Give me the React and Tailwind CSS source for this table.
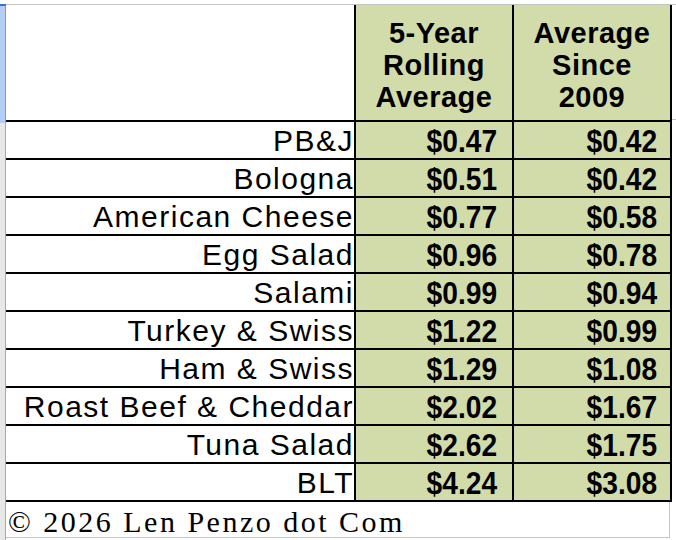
import React from "react";

const rows = [
  ["PB&J", "$0.47", "$0.42"],
  ["Bologna", "$0.51", "$0.42"],
  ["American Cheese", "$0.77", "$0.58"],
  ["Egg Salad", "$0.96", "$0.78"],
  ["Salami", "$0.99", "$0.94"],
  ["Turkey & Swiss", "$1.22", "$0.99"],
  ["Ham & Swiss", "$1.29", "$1.08"],
  ["Roast Beef & Cheddar", "$2.02", "$1.67"],
  ["Tuna Salad", "$2.62", "$1.75"],
  ["BLT", "$4.24", "$3.08"],
];

const label = "font-['Liberation_Sans',Arial,sans-serif] text-[30px] tracking-[1.5px] text-black";
// condensed bold figures, like Arial Narrow
const num =
  "inline-block origin-right scale-x-[0.88] font-['Liberation_Sans',Arial,sans-serif] font-bold text-[32px] leading-none text-black";

const App = () => {
  return (
    <div className="w-[676px] h-[540px] bg-white flex overflow-hidden">
      {/* Row header strip */}
      <div className="w-[6px] flex flex-col">
        <div className="h-[4px] bg-white" />
        <div className="h-[2px] bg-[#3d6fd1]" />
        <div className="h-[117px] bg-[#b3cdf5] border-r border-[#7d9bd3]" />
        <div className="flex-1 bg-[#e8e8e8] border-r border-[#a9a9a9]" />
      </div>

      <div className="flex flex-col">
        <div className="h-[5px] border-b border-[#c4c4c4]" />

        {/* Header */}
        <div className="flex h-[117px] border-b-2 border-black">
          <div className="w-[348px]" />
          <div className="w-[158px] border-l-2 border-black bg-[#d2dcaa] flex items-center justify-center pt-[4px]">
            <div className="font-['Liberation_Sans',Arial,sans-serif] font-bold text-[29px] leading-[32px] tracking-[0.5px] text-center text-black">
              5-Year
              <br />
              Rolling
              <br />
              Average
            </div>
          </div>
          <div className="w-[160px] border-x-2 border-black bg-[#d2dcaa] flex items-center justify-center pt-[4px]">
            <div className="font-['Liberation_Sans',Arial,sans-serif] font-bold text-[29px] leading-[32px] tracking-[0.5px] text-center text-black">
              Average
              <br />
              Since
              <br />
              2009
            </div>
          </div>
        </div>

        {/* Data rows */}
        {rows.map(([name, a, b]) => (
          <div key={name} className="flex h-[38px] border-b-2 border-black">
            <div className={`w-[348px] flex items-center justify-end leading-none pt-[1px] ${label}`}>{name}</div>
            <div className="w-[158px] border-l-2 border-black bg-[#d2dcaa] flex items-center justify-end pr-[15px] pt-[1px]">
              <span className={num}>{a}</span>
            </div>
            <div className="w-[160px] border-x-2 border-black bg-[#d2dcaa] flex items-center justify-end pr-[13px] pt-[1px]">
              <span className={num}>{b}</span>
            </div>
          </div>
        ))}

        {/* Footer */}
        <div className="w-[664px] h-[36px] border-r border-b border-[#c4c4c4] flex items-end pl-[2px]">
          <span className="font-['Liberation_Serif','Times_New_Roman',serif] text-[30px] leading-[30px] tracking-[2.5px] text-black">
            © 2026 Len Penzo dot Com
          </span>
        </div>
      </div>

      <div className="flex-1 flex flex-col">
        <div className="h-[5px] border-b border-[#c4c4c4]" />
        <div className="h-[115px] border-b border-[#c4c4c4]" />
      </div>
    </div>
  );
};

export default App;
